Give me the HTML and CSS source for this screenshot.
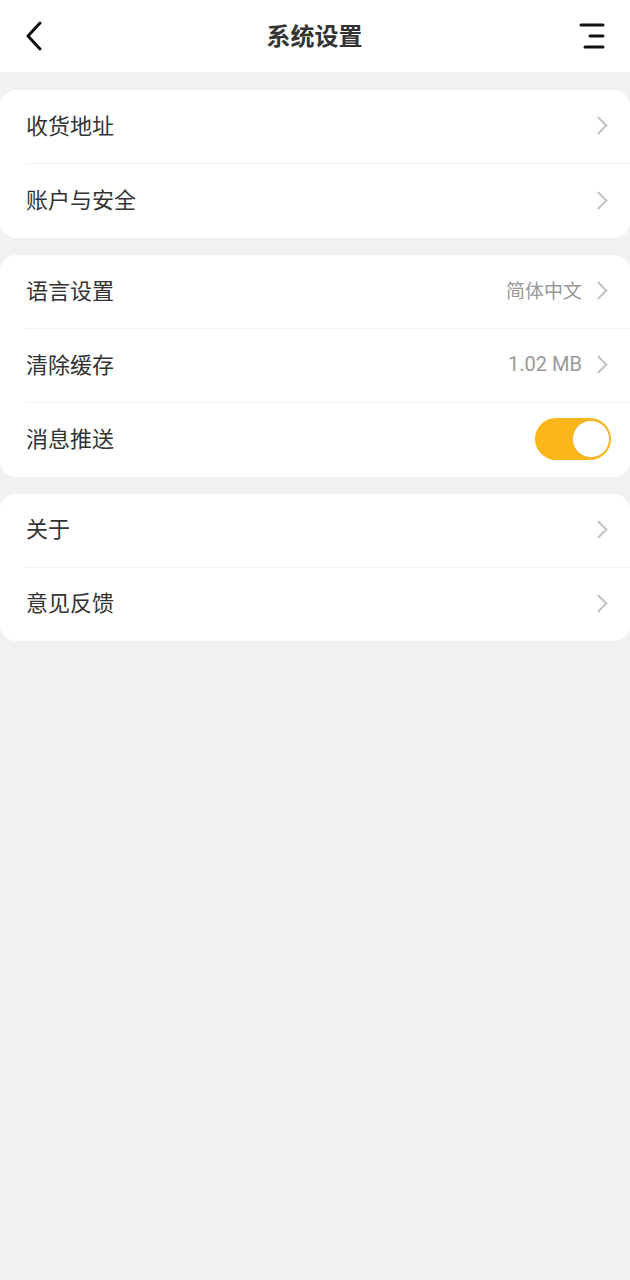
FILE: index.html
```html
<!DOCTYPE html>
<html lang="zh-CN">
<head>
    <meta charset="UTF-8">
    <meta name="viewport" content="width=device-width, initial-scale=1.0">
    <title>系统设置</title>
    <link rel="stylesheet" href="styles.css">
</head>
<body>
    <header class="topbar">
        <span class="back">
            <svg width="20" height="30" viewBox="0 0 20 30"><path d="M16 2 L4 15 L16 28" fill="none" stroke="#111" stroke-width="3" stroke-linecap="round" stroke-linejoin="round"/></svg>
        </span>
        <h1>系统设置</h1>
        <span class="menu">
            <svg width="26" height="28" viewBox="0 0 26 28"><path d="M2 3 H24 M11 14 H24 M6 25 H24" stroke="#111" stroke-width="3" stroke-linecap="round"/></svg>
        </span>
    </header>

    <section class="card">
        <div class="row">
            <span class="label">收货地址</span>
            <span class="arrow"></span>
        </div>
        <div class="row">
            <span class="label">账户与安全</span>
            <span class="arrow"></span>
        </div>
    </section>

    <section class="card">
        <div class="row">
            <span class="label">语言设置</span>
            <span class="value">简体中文</span>
            <span class="arrow"></span>
        </div>
        <div class="row">
            <span class="label">清除缓存</span>
            <span class="value num">1.02 MB</span>
            <span class="arrow"></span>
        </div>
        <div class="row">
            <span class="label">消息推送</span>
            <span class="switch on"><span class="knob"></span></span>
        </div>
    </section>

    <section class="card">
        <div class="row">
            <span class="label">关于</span>
            <span class="arrow"></span>
        </div>
        <div class="row">
            <span class="label">意见反馈</span>
            <span class="arrow"></span>
        </div>
    </section>
</body>
</html>
```

FILE: styles.css
```css
body {
    margin: 0;
    background-color: #f0f1f3;
    font-family: "Noto Sans CJK SC", "Noto Sans", sans-serif;
    color: #333;
}
.topbar {
    height: 72px;
    background: white;
    display: flex;
    align-items: center;
    justify-content: space-between;
    padding: 0 25px 0 24px;
    margin-bottom: 18px;
}
.topbar h1 {
    margin: 0 0 2px 0;
    font-size: 24px;
    font-weight: bold;
    color: #333;
    line-height: 1;
}
.back, .menu {
    display: flex;
    width: 30px;
}
.menu {
    justify-content: flex-end;
}
.card {
    background: white;
    border-radius: 16px;
    margin: 0 0 17px 0;
}
.row {
    height: 74px;
    display: flex;
    align-items: center;
    margin-left: 26px;
    padding-right: 22px;
    border-bottom: 1px solid #f2f2f4;
    box-sizing: border-box;
}
.row:last-child {
    border-bottom: none;
}
.card:first-child .row,
.card:last-child .row {
    height: 73.5px;
}
.label {
    flex: 1;
    font-size: 22px;
    color: #333;
    margin-bottom: 6px;
}
.value {
    font-size: 19px;
    color: #999;
    margin-right: 10px;
    margin-bottom: 5px;
}
.value.num {
    font-family: Roboto, sans-serif;
    font-size: 20px;
    margin-bottom: 3px;
}
.arrow {
    width: 11px;
    height: 11px;
    border-top: 2px solid #c4c4c4;
    border-right: 2px solid #c4c4c4;
    transform: rotate(45deg);
    margin: 0 3px 2px 0;
}
.switch {
    width: 76px;
    height: 42px;
    border-radius: 21px;
    background: #fbb719;
    display: flex;
    align-items: center;
    justify-content: flex-end;
    margin: 0 -3px 2px 0;
    box-sizing: border-box;
    padding: 1px;
}
.knob {
    width: 38px;
    height: 38px;
    border-radius: 50%;
    background: white;
    border: 1px solid #e9b63a;
    box-sizing: border-box;
}
```
